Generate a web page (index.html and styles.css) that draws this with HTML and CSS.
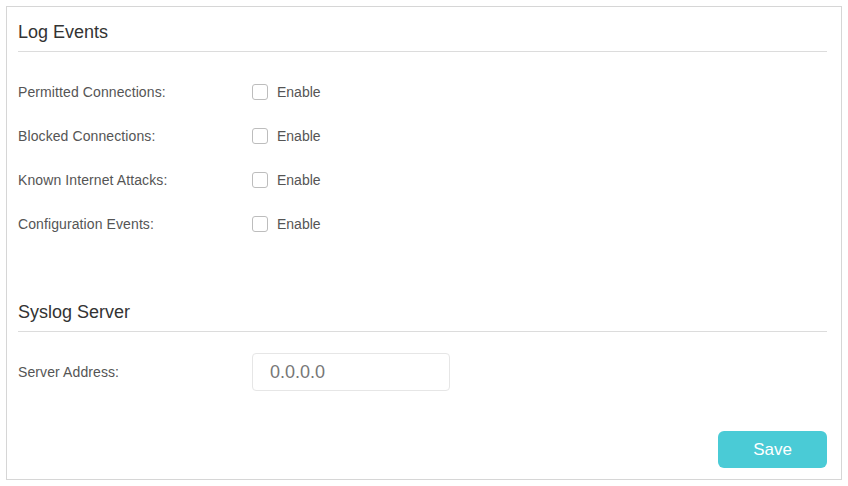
FILE: index.html
```html
<!DOCTYPE html>
<html lang="en">

<head>
  <meta charset="UTF-8">
  <meta name="viewport" content="width=device-width, initial-scale=1.0">
  <title>Log Settings</title>
  <link rel="stylesheet" href="styles.css">
</head>

<body>
  <div class="panel">
    <h2 class="section-title">Log Events</h2>
    <div class="rows">
      <div class="row">
        <span class="label">Permitted Connections:</span>
        <label class="check"><span class="box"></span>Enable</label>
      </div>
      <div class="row">
        <span class="label">Blocked Connections:</span>
        <label class="check"><span class="box"></span>Enable</label>
      </div>
      <div class="row">
        <span class="label">Known Internet Attacks:</span>
        <label class="check"><span class="box"></span>Enable</label>
      </div>
      <div class="row">
        <span class="label">Configuration Events:</span>
        <label class="check"><span class="box"></span>Enable</label>
      </div>
    </div>

    <h2 class="section-title syslog">Syslog Server</h2>
    <div class="server-row">
      <span class="label">Server Address:</span>
      <div class="input">0.0.0.0</div>
    </div>

    <div class="actions">
      <button class="btn-save">Save</button>
    </div>
  </div>
</body>

</html>
```

FILE: styles.css
```css
* {
  padding: 0;
  margin: 0;
  box-sizing: border-box;
}

body {
  font-family: "Liberation Sans", Arial, sans-serif;
  background-color: #fff;
}

.panel {
  margin: 6px;
  height: 474px;
  border: 1px solid #d6d6d6;
  padding: 0 14px 0 11px;
}

.section-title {
  font-size: 18px;
  font-weight: normal;
  line-height: 22px;
  color: #333;
  padding: 14px 0 8px;
  border-bottom: 1px solid #dcdcdc;
}

.syslog {
  margin-top: 41px;
}

.rows {
  margin-top: 18px;
}

.row {
  display: flex;
  align-items: center;
  height: 44px;
}

.label {
  width: 234px;
  font-size: 14px;
  letter-spacing: 0.1px;
  color: #555;
}

.check {
  display: flex;
  align-items: center;
  font-size: 14px;
  color: #555;
}

.box {
  width: 16px;
  height: 16px;
  border: 1px solid #bdbdbd;
  border-radius: 3px;
  margin-right: 9px;
  background-color: #fff;
}

.server-row {
  display: flex;
  align-items: center;
  margin-top: 21px;
}

.input {
  width: 198px;
  height: 38px;
  border: 1px solid #e6e6e6;
  border-radius: 4px;
  padding-left: 17px;
  font-size: 18px;
  line-height: 36px;
  color: #777;
}

.actions {
  display: flex;
  justify-content: flex-end;
  margin-top: 40px;
}

.btn-save {
  width: 109px;
  height: 37px;
  border: none;
  border-radius: 6px;
  background-color: #4acbd6;
  color: #fff;
  font-family: "Liberation Sans", Arial, sans-serif;
  font-size: 17px;
  cursor: pointer;
}
```
